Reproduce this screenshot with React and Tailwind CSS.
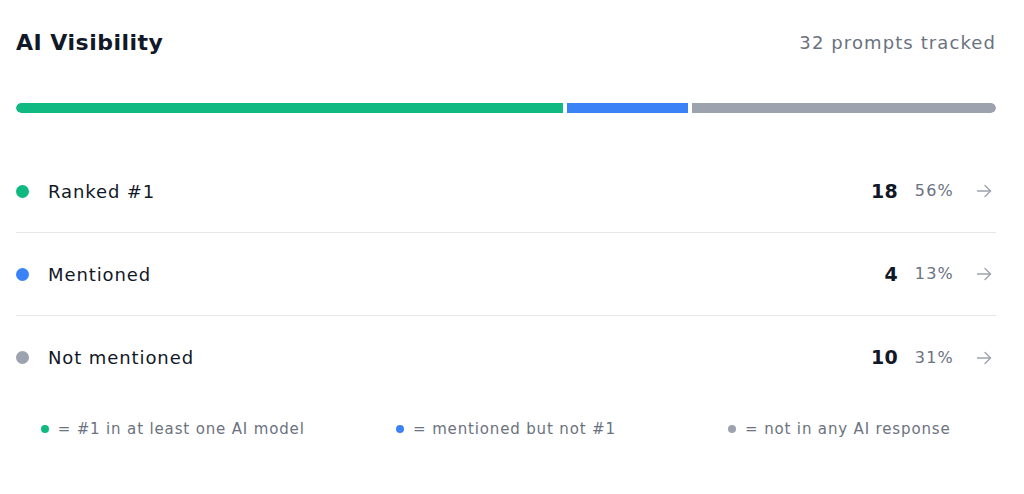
import React from "react";

const rows = [
  { label: "Ranked #1", count: 18, pct: "56%", dot: "bg-[#10b981]" },
  { label: "Mentioned", count: 4, pct: "13%", dot: "bg-[#3b82f6]" },
  { label: "Not mentioned", count: 10, pct: "31%", dot: "bg-[#9ca3af]" },
];

const legend = [
  { text: "= #1 in at least one AI model", dot: "bg-[#10b981]" },
  { text: "= mentioned but not #1", dot: "bg-[#3b82f6]" },
  { text: "= not in any AI response", dot: "bg-[#9ca3af]" },
];

function Arrow() {
  return (
    <svg width="16" height="16" viewBox="0 0 16 16" fill="none" stroke="#9ca3af" strokeWidth="1.4" strokeLinecap="round" strokeLinejoin="round">
      <path d="M1.5 8h13" />
      <path d="M9 2.5l5.5 5.5-5.5 5.5" />
    </svg>
  );
}

export default function App() {
  return (
    <div className="w-[1024px] h-[494px] bg-white" style={{ fontFamily: "'DejaVu Sans', 'Open Sans', sans-serif" }}>
      <div className="w-[980px] ml-4 pt-[26px]">
        <div className="flex items-center justify-between h-[32px]">
          <h2 className="text-[22px] font-bold text-[#111827] tracking-[0.5px]">AI Visibility</h2>
          <span className="text-[18px] text-[#6b7280] tracking-[1.1px]">32 prompts tracked</span>
        </div>

        <div className="flex gap-[4px] h-[10px] mt-[45px] rounded-full overflow-hidden">
          <div className="bg-[#10b981] rounded-l-full" style={{ flexGrow: 18, flexBasis: 0 }} />
          <div className="bg-[#3b82f6]" style={{ flexGrow: 4, flexBasis: 0 }} />
          <div className="bg-[#9ca3af] rounded-r-full" style={{ flexGrow: 10, flexBasis: 0 }} />
        </div>

        <div className="mt-[37px]">
          {rows.map((r, i) => (
            <div
              key={r.label}
              className={`flex items-center h-[83px] ${i < rows.length - 1 ? "border-b border-[#e5e7eb]" : ""}`}
            >
              <span className={`w-[13px] h-[13px] rounded-full ${r.dot}`} />
              <span className="ml-[19px] text-[18px] text-[#111827] tracking-[0.9px]">{r.label}</span>
              <div className="ml-auto flex items-center">
                <span className="text-[19px] font-bold text-[#111827] tracking-[0.3px]">{r.count}</span>
                <span className="ml-[16px] w-[40px] text-right text-[16px] text-[#6b7280] tracking-[1.2px]">{r.pct}</span>
                <span className="ml-[22px] mr-[4px]"><Arrow /></span>
              </div>
            </div>
          ))}
        </div>

        <div className="grid grid-cols-3 -mx-[10px] mt-[19px]">
          {legend.map((l) => (
            <div key={l.text} className="flex items-center justify-center gap-[9px]">
              <span className={`w-[8px] h-[8px] rounded-full ${l.dot}`} />
              <span className="text-[15px] text-[#6b7280] tracking-[0.85px]">{l.text}</span>
            </div>
          ))}
        </div>
      </div>
    </div>
  );
}
